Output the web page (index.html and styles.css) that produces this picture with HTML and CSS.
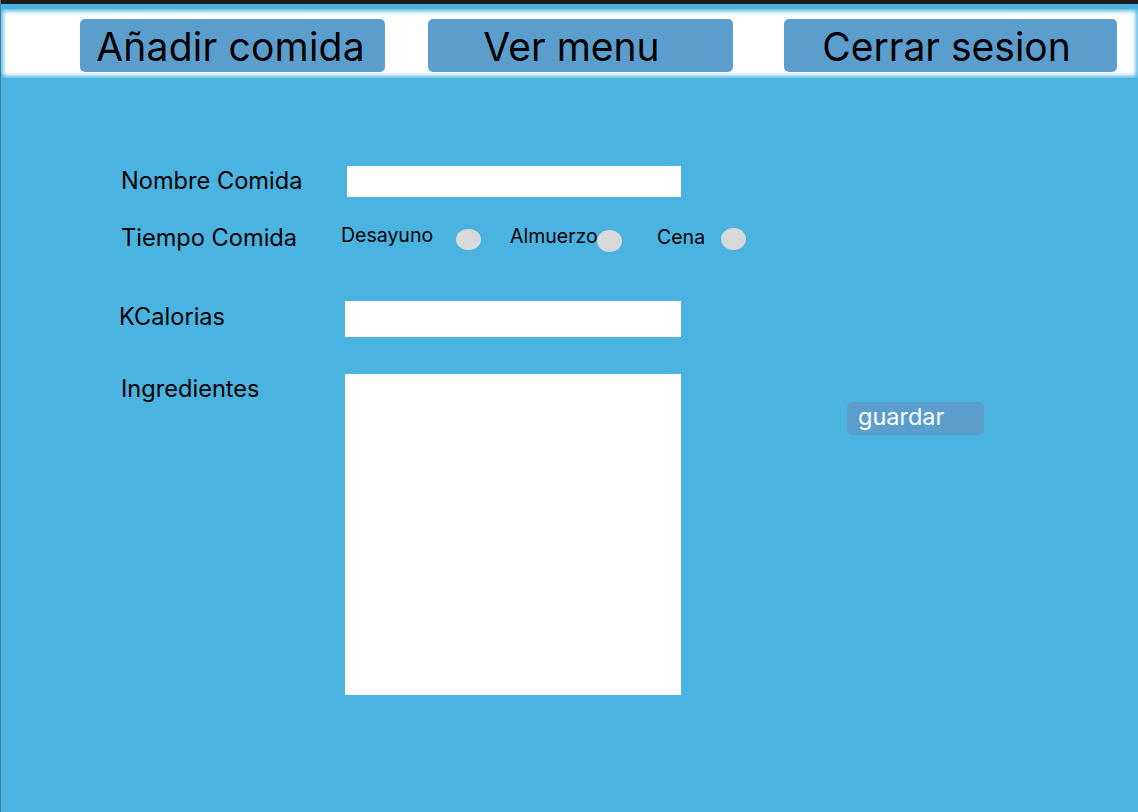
FILE: index.html
```html
<!DOCTYPE html>
<html lang="es">
<head>
<meta charset="utf-8">
<title>Añadir comida</title>
<link rel="stylesheet" href="styles.css">
</head>
<body>
<div class="topbar"></div>
<div class="strip"></div>
<header class="header">
  <nav class="nav">
    <button class="nav-btn btn-add">Añadir comida</button>
    <button class="nav-btn btn-menu">Ver menu</button>
    <button class="nav-btn btn-logout">Cerrar sesion</button>
  </nav>
</header>
<main class="form">
  <div class="row row-nombre">
    <label class="label label-nombre">Nombre Comida</label>
    <input class="field field-nombre" type="text">
  </div>
  <div class="row row-tiempo">
    <span class="label label-tiempo">Tiempo Comida</span>
    <div class="radios">
      <span class="opt opt-des">Desayuno</span><span class="dot dot-des"></span>
      <span class="opt opt-alm">Almuerzo</span><span class="dot dot-alm"></span>
      <span class="opt opt-cena">Cena</span><span class="dot dot-cena"></span>
    </div>
  </div>
  <div class="row row-kcal">
    <label class="label label-kcal">KCalorias</label>
    <input class="field field-kcal" type="text">
  </div>
  <div class="row row-ingr">
    <label class="label label-ingr">Ingredientes</label>
    <textarea class="field field-ingr"></textarea>
    <button class="save">guardar</button>
  </div>
</main>
</body>
</html>
```

FILE: styles.css
```css
* { box-sizing: border-box; }
html, body { margin: 0; padding: 0; }
body {
  width: 1138px;
  height: 812px;
  overflow: hidden;
  background: #4ab3e0;
  font-family: Inter, "Noto Sans", "Liberation Sans", sans-serif;
  color: #000;
  border-left: 1px solid #3e7f9b;
}
.topbar { height: 4px; background: #1e1e1e; }
.strip { height: 5px; background: #4ab3e0; }
.header {
  height: 69px;
  background: #ffffff;
  box-shadow: inset 0 0 4px 2px #4ab3e0;
}
.nav {
  display: flex;
  padding: 10px 0 0 79px;
}
.nav-btn {
  height: 53px;
  border: 0;
  border-radius: 5px;
  background: #5b9ecd;
  font-family: inherit;
  font-size: 39px;
  color: #000;
  padding: 3px 0 0 0;
  line-height: 50px;
  text-align: center;
  white-space: nowrap;
}
.btn-add { width: 305px; padding-right: 4px; letter-spacing: 0.2px; }
.btn-menu { width: 305px; margin-left: 43px; padding-right: 18px; }
.btn-logout { width: 333px; margin-left: 51px; padding-right: 8px; }

.form { padding: 88px 0 0 120px; }
.row { display: flex; align-items: center; }
.label { font-size: 23.6px; white-space: nowrap; }
.field {
  border: 0;
  background: #fff;
  display: block;
  margin: 0;
  padding: 0;
  resize: none;
}
.label-nombre { width: 226px; margin-top: -2px; }
.field-nombre { width: 334px; height: 31px; }

.row-tiempo { margin-top: 28px; height: 28px; align-items: flex-start; }
.label-tiempo { width: 220px; line-height: 26px; }
.radios { display: flex; align-items: flex-start; }
.opt { font-size: 19.5px; line-height: 20px; white-space: nowrap; }
.dot {
  width: 25px;
  height: 21px;
  border-radius: 50%;
  background: #d9d9d9;
  flex: none;
}
.opt-des { width: 115px; }
.dot-des { margin-top: 4px; }
.opt-alm { width: 87px; margin-left: 29px; margin-top: 1px; }
.dot-alm { margin-top: 5px; height: 22px; }
.opt-cena { width: 64px; margin-left: 35px; margin-top: 2px; }
.dot-cena { margin-top: 3px; height: 22px; }

.row-kcal { margin-top: 48px; }
.label-kcal { width: 226px; margin-left: -2px; margin-top: -6px; }
.field-kcal { width: 336px; height: 36px; }

.row-ingr { margin-top: 37px; align-items: flex-start; }
.label-ingr { width: 224px; padding-top: 0; }
.field-ingr { width: 336px; height: 321px; }
.save {
  margin-left: 166px;
  margin-top: 28px;
  width: 137px;
  height: 33px;
  border: 0;
  border-radius: 5px;
  background: #5b9ecd;
  color: #fff;
  font-family: inherit;
  font-size: 23.5px;
  text-align: left;
  padding: 0 0 4px 11px;
  white-space: nowrap;
}
```
